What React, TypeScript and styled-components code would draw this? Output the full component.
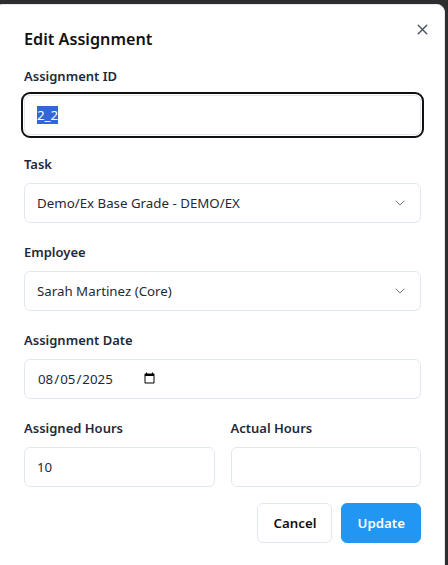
import React from "react";
import styled, { createGlobalStyle } from "styled-components";

const Global = createGlobalStyle`
  html, body { margin: 0; padding: 0; background: #2d2d2d; height: 100%; overflow: hidden; }
  body { font-family: "Noto Sans", "Open Sans", sans-serif; }
  * { box-sizing: border-box; }
`;

const Stage = styled.div`
  padding-top: 4px;
  padding-right: 3px;
`;

const Dialog = styled.div`
  position: relative;
  margin-left: -6px;
  background: #fff;
  border: 1px solid #e2e8f0;
  border-radius: 8px;
  padding: 23px 23px 24px 29px;
  min-height: 600px;
  color: #111827;
`;

const Title = styled.h2`
  margin: 0 0 16px;
  font-size: 16.2px;
  line-height: 22px;
  font-weight: 600;
  color: #111;
`;

const Close = styled.button`
  position: absolute;
  top: 14px;
  right: 12px;
  width: 20px;
  height: 20px;
  padding: 0;
  border: none;
  background: none;
  color: #4b5563;
  display: flex;
  align-items: center;
  justify-content: center;
`;

const Form = styled.div`
  display: flex;
  flex-direction: column;
  gap: 19px;
`;

const Field = styled.div`
  display: flex;
  flex-direction: column;
  min-width: 0;
`;

const Label = styled.label`
  display: block;
  font-size: 13px;
  line-height: 20px;
  font-weight: 600;
  color: #1f2937;
  margin-bottom: 9px;
`;

const boxBase = `
  height: 40px;
  width: 100%;
  border: 1px solid #e2e8f0;
  border-radius: 6px;
  background: #fff;
  padding: 0 12px;
  font-family: "Noto Sans", "Open Sans", sans-serif;
  font-size: 13.3px;
  color: #1f2937;
`;

const FocusedBox = styled.div`
  ${boxBase}
  display: flex;
  align-items: center;
  outline: 2px solid #101010;
  outline-offset: 1px;
`;

const Selected = styled.span`
  background: #3367d6;
  color: #fff;
  line-height: 18px;
`;

const Trigger = styled.button`
  ${boxBase}
  display: flex;
  align-items: center;
  justify-content: space-between;
  text-align: left;
`;

const Input = styled.input`
  ${boxBase}
  display: block;
  outline: none;
`;

const DateInput = styled.input`
  ${boxBase}
  display: flex;
  outline: none;
  &::-webkit-datetime-edit {
    flex: none;
  }
  &::-webkit-calendar-picker-indicator {
    margin-left: 1px;
  }
`;

const Row = styled.div`
  display: grid;
  grid-template-columns: 1fr 1fr;
  gap: 16px;
`;

const Actions = styled.div`
  display: flex;
  justify-content: flex-end;
  gap: 9px;
  margin-top: -3px;
`;

const Button = styled.button<{ $primary?: boolean }>`
  height: 40px;
  padding: 0 15px;
  border-radius: 6px;
  font-family: "Noto Sans", "Open Sans", sans-serif;
  font-size: 13.3px;
  font-weight: 600;
  border: 1px solid ${(p) => (p.$primary ? "#2196f3" : "#e2e8f0")};
  background: ${(p) => (p.$primary ? "#2196f3" : "#fff")};
  color: ${(p) => (p.$primary ? "#fff" : "#111")};
`;

const Chevron = () => (
  <svg width="16" height="16" viewBox="0 0 24 24" fill="none" stroke="#6b7280" strokeWidth="1.5" strokeLinecap="round" strokeLinejoin="round">
    <path d="m6 9 6 6 6-6" />
  </svg>
);

export default function App() {
  return (
    <>
      <Global />
      <Stage>
        <Dialog>
          <Title>Edit Assignment</Title>
          <Close aria-label="Close">
            <svg width="17" height="17" viewBox="0 0 24 24" fill="none" stroke="currentColor" strokeWidth="2" strokeLinecap="round">
              <path d="M18 6 6 18M6 6l12 12" />
            </svg>
          </Close>
          <Form>
            <Field>
              <Label>Assignment ID</Label>
              <FocusedBox>
                <Selected>2_2</Selected>
              </FocusedBox>
            </Field>
            <Field>
              <Label>Task</Label>
              <Trigger>
                <span>Demo/Ex Base Grade - DEMO/EX</span>
                <Chevron />
              </Trigger>
            </Field>
            <Field>
              <Label>Employee</Label>
              <Trigger>
                <span>Sarah Martinez (Core)</span>
                <Chevron />
              </Trigger>
            </Field>
            <Field>
              <Label>Assignment Date</Label>
              <DateInput type="date" defaultValue="2025-08-05" />
            </Field>
            <Row>
              <Field>
                <Label>Assigned Hours</Label>
                <Input type="number" defaultValue="10" />
              </Field>
              <Field>
                <Label>Actual Hours</Label>
                <Input type="number" />
              </Field>
            </Row>
            <Actions>
              <Button>Cancel</Button>
              <Button $primary>Update</Button>
            </Actions>
          </Form>
        </Dialog>
      </Stage>
    </>
  );
}
